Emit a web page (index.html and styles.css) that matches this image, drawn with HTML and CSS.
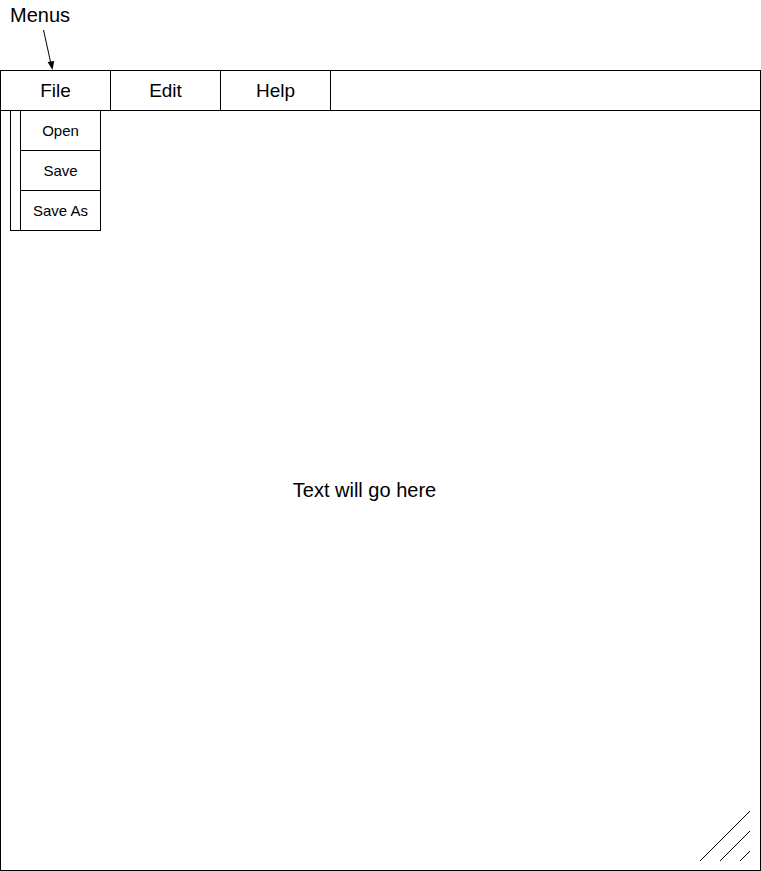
FILE: index.html
```html
<!DOCTYPE html>
<html>
<head>
  <title>Editor wireframe</title>
  <meta name="viewport" content="width=device-width, initial-scale=1">
  <link rel="stylesheet" href="styles.css">
</head>
<body>
  <div class="note">
    <span class="note-label">Menus</span>
    <!-- arrow pointing at the menu bar -->
    <svg class="note-arrow" width="70" height="70" viewBox="0 0 70 70">
      <line x1="43.5" y1="30" x2="51" y2="64" stroke="#000" stroke-width="1"/>
      <polygon points="52.5,70 47.6,62 54.2,61" fill="#000"/>
    </svg>
  </div>

  <div class="window">
    <div class="menubar">
      <div class="menu-item">File</div>
      <div class="menu-item">Edit</div>
      <div class="menu-item">Help</div>
    </div>

    <div class="dropdown">
      <div class="dropdown-gutter"></div>
      <div class="dropdown-list">
        <div class="dropdown-item">Open</div>
        <div class="dropdown-item">Save</div>
        <div class="dropdown-item">Save As</div>
      </div>
    </div>

    <div class="editor">Text will go here</div>

    <svg class="grip" width="60" height="60" viewBox="0 0 60 60">
      <line x1="0" y1="51" x2="50" y2="1" stroke="#000" stroke-width="1"/>
      <line x1="20" y1="51" x2="50" y2="21" stroke="#000" stroke-width="1"/>
      <line x1="40" y1="51" x2="50" y2="41" stroke="#000" stroke-width="1"/>
    </svg>
  </div>
</body>
</html>
```

FILE: styles.css
```css
body {
  margin: 0;
  font-family: "Liberation Sans", Arial, sans-serif;
  color: #000;
  background: #fff;
}
.note {
  position: relative;
  height: 70px;
}
.note-label {
  display: block;
  padding: 4px 0 0 10px;
  font-size: 20px;
  line-height: 22px;
}
.note-arrow {
  position: absolute;
  left: 0;
  top: 0;
}
.window {
  position: relative;
  width: 761px;
  height: 801px;
  box-sizing: border-box;
  border: 1px solid #000;
  display: flex;
  flex-direction: column;
}
.menubar {
  display: flex;
  height: 40px;
  box-sizing: border-box;
  border-bottom: 1px solid #000;
}
.menu-item {
  width: 110px;
  box-sizing: border-box;
  border-right: 1px solid #000;
  display: flex;
  align-items: center;
  justify-content: center;
  font-size: 19px;
}
.dropdown {
  position: absolute;
  left: 9px;
  top: 39px;
  width: 91px;
  box-sizing: border-box;
  border: 1px solid #000;
  background: #fff;
  display: flex;
}
.dropdown-gutter {
  width: 10px;
  box-sizing: border-box;
  border-right: 1px solid #000;
}
.dropdown-list {
  flex: 1;
}
.dropdown-item {
  height: 40px;
  box-sizing: border-box;
  border-bottom: 1px solid #000;
  display: flex;
  align-items: center;
  justify-content: center;
  font-size: 15px;
}
.dropdown-item:last-child {
  height: 39px;
  border-bottom: none;
}
.editor {
  flex: 1;
  display: flex;
  align-items: center;
  justify-content: center;
  padding-right: 32px;
  font-size: 20px;
}
.grip {
  position: absolute;
  right: 0;
  bottom: 0;
}
```
